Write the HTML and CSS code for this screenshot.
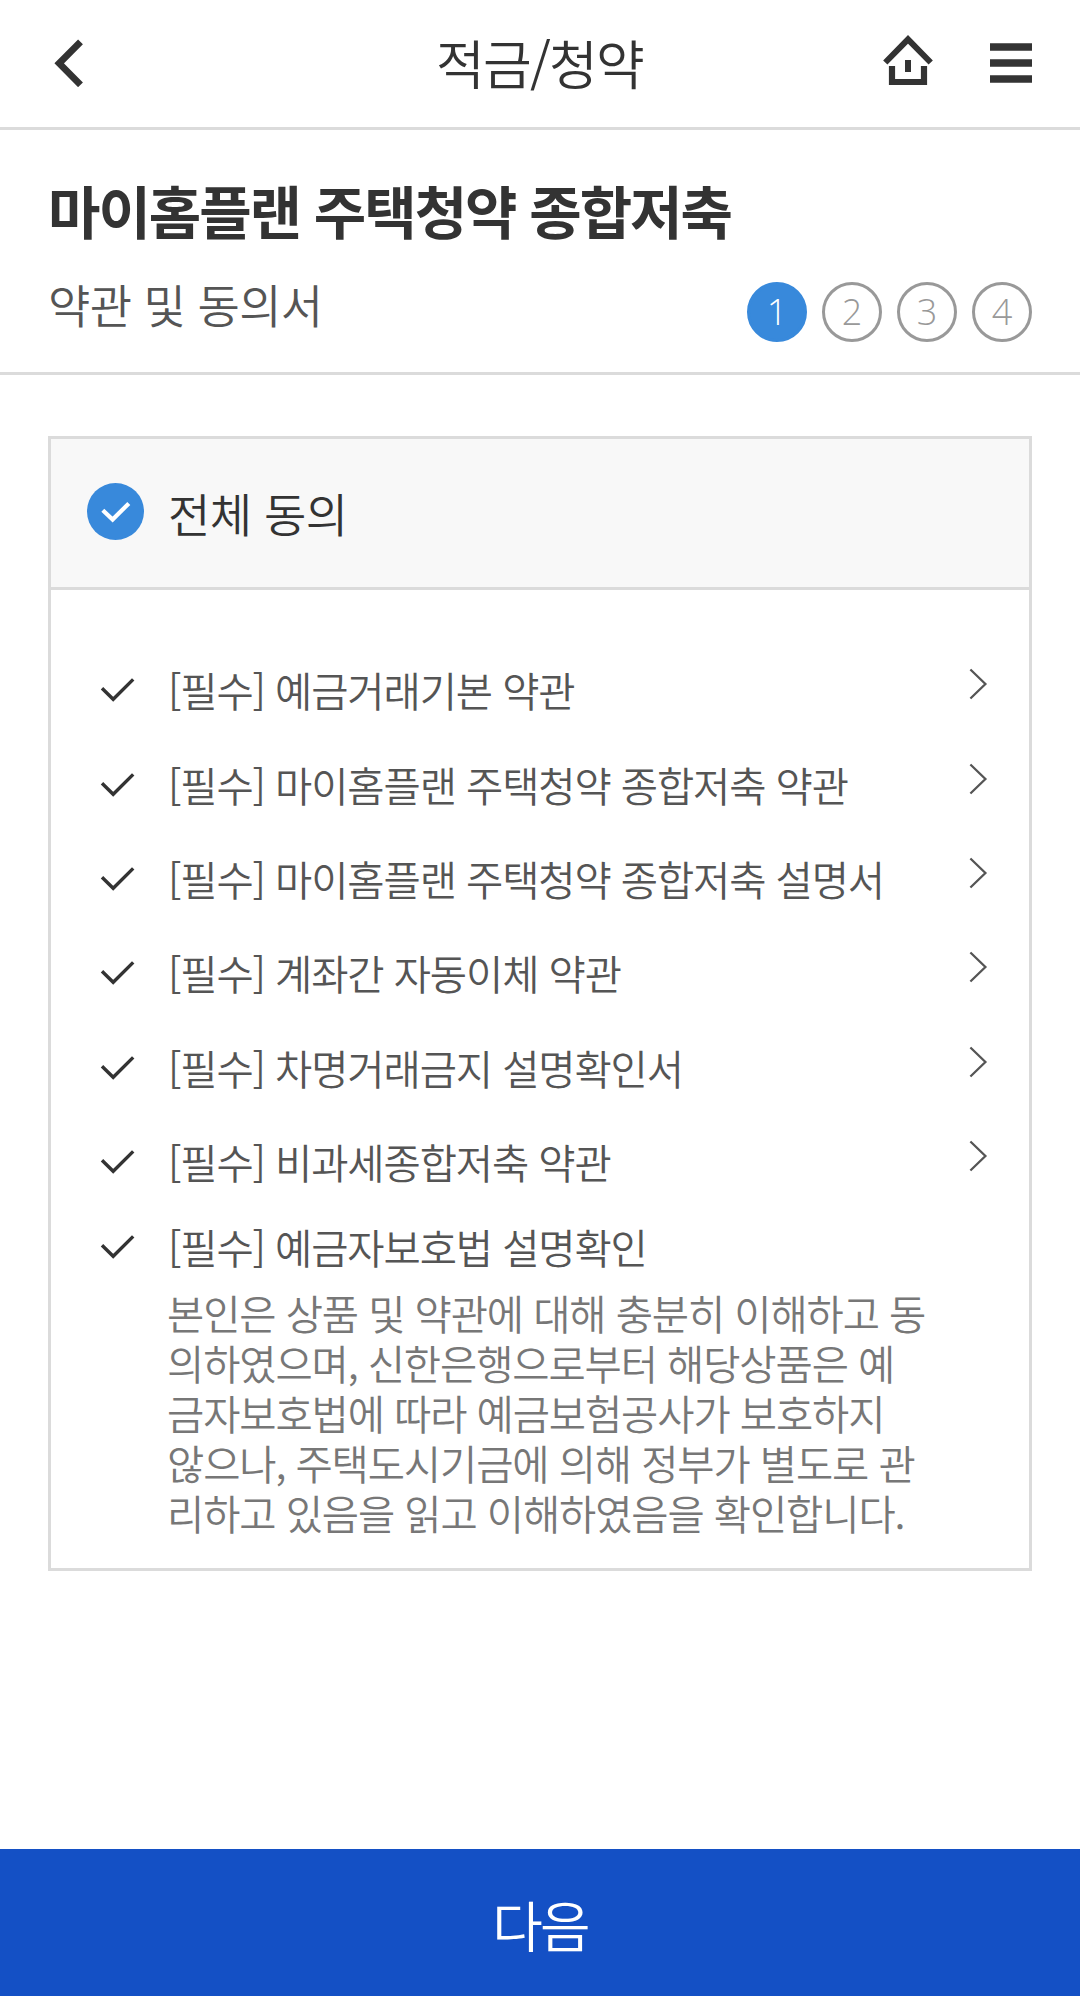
FILE: index.html
```html
<!DOCTYPE html>
<html lang="ko">
<head>
<meta charset="utf-8">
<title>적금/청약</title>
<link rel="stylesheet" href="styles.css">
</head>
<body>
<svg class="defs" width="0" height="0" aria-hidden="true">
  <symbol id="check" viewBox="0 0 36 26"><path d="M2 11.200 13.200 22.300 33.200 2.400" fill="none" stroke="currentColor" stroke-width="3.400"/></symbol>
  <symbol id="check-bold" viewBox="0 0 30 22"><path d="M1.800 9.300 11.600 18.600 27.800 2.400" fill="none" stroke="currentColor" stroke-width="4.200"/></symbol>
  <symbol id="chevron" viewBox="0 0 20 32"><path d="M2.400 1.500 17.400 16 2.400 30.500" fill="none" stroke="currentColor" stroke-width="2.300"/></symbol>
</svg>
<header class="topbar">
  <a class="back" aria-label="뒤로"><svg width="30" height="48" viewBox="0 0 30 48"><path d="M26.500 2.800 5.200 24.300 26.500 45.800" fill="none" stroke="#333" stroke-width="6.800"/></svg></a>
  <h1 class="topbar-title">적금/청약</h1>
  <nav class="actions">
    <svg class="home" width="50" height="51" viewBox="0 0 50 51"><path d="M2.300 27.500 25 4.300 47.700 27.500" fill="none" stroke="#333" stroke-width="6"/><path d="M9 31v16h32V31" fill="none" stroke="#333" stroke-width="6.200"/><path d="M22 25h6v12h-6z" fill="#333"/></svg>
    <svg width="42" height="40" viewBox="0 0 42 40"><path d="M0 .3h42v7.400H0zM0 16.300h42v7.400H0zM0 32.300h42v7.400H0z" fill="#333"/></svg>
  </nav>
</header>
<section class="intro">
  <h2 class="product">마이홈플랜 주택청약 종합저축</h2>
  <div class="step-row">
    <p class="step-name">약관 및 동의서</p>
    <ol class="steps"><li class="step current">1</li><li class="step">2</li><li class="step">3</li><li class="step">4</li></ol>
  </div>
</section>
<main class="terms">
  <label class="agree-all"><span class="badge"><svg width="30" height="22"><use href="#check-bold"/></svg></span><span class="agree-label">전체 동의</span></label>
  <ul class="list">
    <li class="item"><svg class="tick"><use href="#check"/></svg><span class="name">[필수] 예금거래기본 약관</span><svg class="more"><use href="#chevron"/></svg></li>
    <li class="item"><svg class="tick"><use href="#check"/></svg><span class="name">[필수] 마이홈플랜 주택청약 종합저축 약관</span><svg class="more"><use href="#chevron"/></svg></li>
    <li class="item"><svg class="tick"><use href="#check"/></svg><span class="name">[필수] 마이홈플랜 주택청약 종합저축 설명서</span><svg class="more"><use href="#chevron"/></svg></li>
    <li class="item"><svg class="tick"><use href="#check"/></svg><span class="name">[필수] 계좌간 자동이체 약관</span><svg class="more"><use href="#chevron"/></svg></li>
    <li class="item"><svg class="tick"><use href="#check"/></svg><span class="name">[필수] 차명거래금지 설명확인서</span><svg class="more"><use href="#chevron"/></svg></li>
    <li class="item"><svg class="tick"><use href="#check"/></svg><span class="name">[필수] 비과세종합저축 약관</span><svg class="more"><use href="#chevron"/></svg></li>
    <li class="item last"><svg class="tick"><use href="#check"/></svg><span class="name">[필수] 예금자보호법 설명확인</span></li>
  </ul>
  <p class="desc">본인은 상품 및 약관에 대해 충분히 이해하고 동<br>의하였으며, 신한은행으로부터 해당상품은 예<br>금자보호법에 따라 예금보험공사가 보호하지<br>않으나, 주택도시기금에 의해 정부가 별도로 관<br>리하고 있음을 읽고 이해하였음을 확인합니다.</p>
</main>
<button class="next">다음</button>
</body>
</html>
```
FILE: styles.css
```css
* { box-sizing: border-box; margin: 0; padding: 0; letter-spacing: -0.05em; }
body {
  display: flex;
  flex-direction: column;
  height: 1996px;
  background: #fff;
  color: #333;
  font-family: "Noto Sans CJK KR", sans-serif;
  font-weight: 350;
  white-space: nowrap;
}
.defs { position: absolute; }
svg { display: block; flex: none; }
.topbar {
  display: grid;
  grid-template-columns: 1fr auto 1fr;
  align-items: center;
  height: 130px;
  padding: 0 48px 2px 54px;
  border-bottom: 3px solid #dbdbdb;
}
.topbar-title { padding: 0 7px 2px 0; font-size: 53px; font-weight: 350; line-height: 78px; letter-spacing: -1.8px; }
.actions { display: flex; justify-content: flex-end; align-items: center; gap: 57px; }
.home { margin-bottom: 4px; }
.intro { height: 245px; padding: 39px 48px 0; border-bottom: 3px solid #dbdbdb; }
.product { font-size: 57px; font-weight: 700; line-height: 80px; letter-spacing: -2.05px; }
.step-row { display: flex; justify-content: space-between; margin-top: 22px; }
.step-name { color: #555; font-size: 46px; line-height: 64px; letter-spacing: -0.65px; }
.steps { display: flex; gap: 15px; margin-top: 11px; list-style: none; }
.step {
  width: 60px;
  height: 60px;
  border: 3px solid #999;
  border-radius: 50%;
  color: #999;
  font-family: "Open Sans", sans-serif;
  font-weight: 300;
  font-size: 36px;
  line-height: 54px;
  text-align: center;
  letter-spacing: 0;
}
.step.current { border-color: #3889db; background: #3889db; color: #fff; }
.terms { height: 1135px; margin: 61px 48px 0; border: 3px solid #dbdbdb; }
.agree-all {
  display: flex;
  align-items: center;
  height: 151px;
  padding: 0 0 3px 36px;
  border-bottom: 3px solid #dbdbdb;
  background: #f8f8f8;
}
.badge {
  display: flex;
  align-items: center;
  justify-content: center;
  width: 57px;
  height: 57px;
  border-radius: 50%;
  background: #3889db;
  color: #fff;
}
.agree-label { margin-left: 24px; font-size: 46px; line-height: 66px; letter-spacing: -0.5px; }
.list { padding-top: 53px; list-style: none; }
.item { display: flex; align-items: center; height: 94.4px; padding: 0 41px 0 49px; color: #555; }
.tick { width: 36px; height: 26px; color: #333; }
.name { flex: 1; margin-left: 32px; font-size: 40.5px; line-height: 60px; letter-spacing: -1.12px; }
.more { width: 20px; height: 32px; margin-bottom: 12px; color: #555; }
.last { height: 76px; }
.desc { padding: 3px 0 0 116px; color: #777; font-size: 40.5px; line-height: 50px; letter-spacing: -1.12px; }
.next {
  height: 147px;
  margin-top: auto;
  border: 0;
  background: #1450c5;
  color: #fff;
  font: inherit;
  font-size: 55px;
}
```
